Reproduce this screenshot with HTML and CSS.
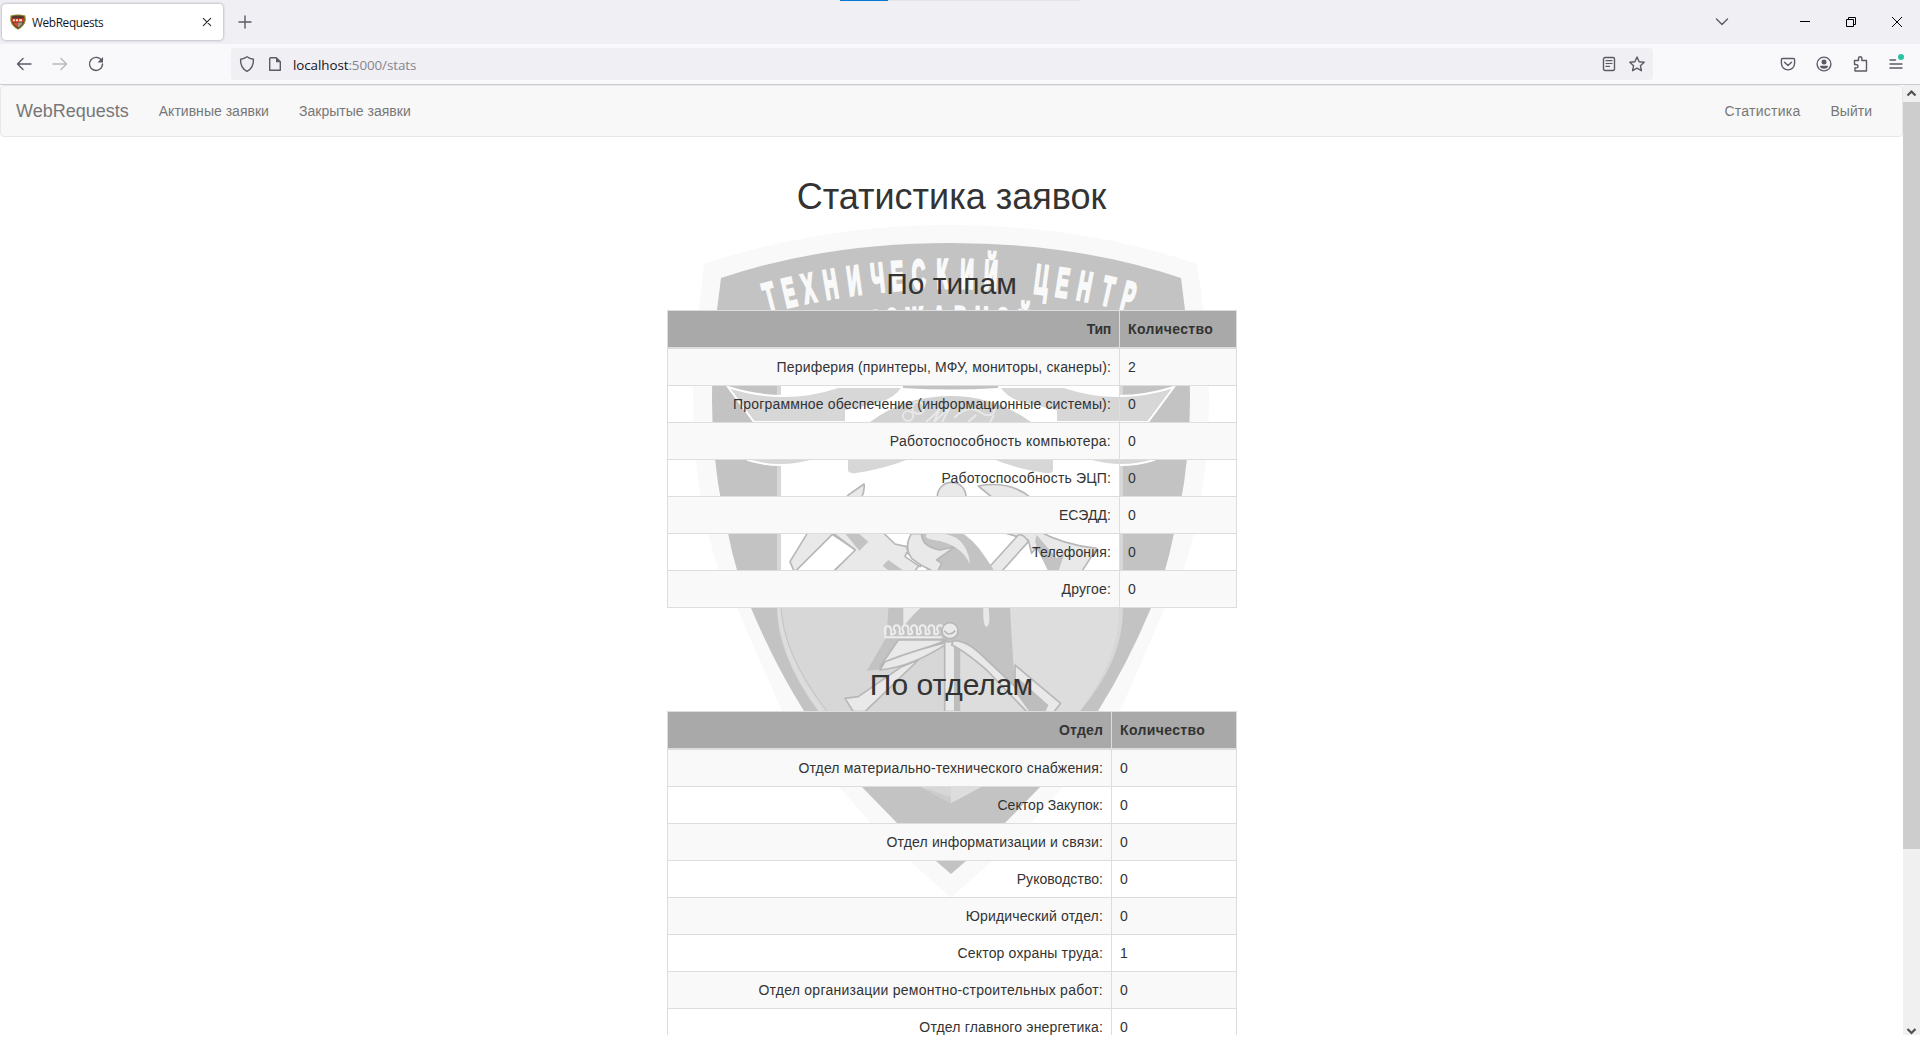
FILE: index.html
```html
<!DOCTYPE html>
<html lang="ru">
<head>
<meta charset="utf-8">
<title>WebRequests</title>
<link rel="stylesheet" href="styles.css">
</head>
<body>
<div class="window">
  <div class="progress"><span class="progress-done"></span></div>

  <div class="tabstrip">
    <div class="tab">
      <svg class="favicon" width="16" height="16" viewBox="0 0 16 16"><path d="M.6 1.600Q8-.8 15.400 1.600L15.800 6Q15 12 8 15.800 1 12 .2 6Z" fill="#8f8a2e"/><path d="M1.800 2.400Q8 .6 14.200 2.400L14.500 6Q14 11 8 14.500 2 11 1.500 6Z" fill="#56362c"/><path d="M2 4.500h12v3.500H2z" fill="#d63a22"/><path d="M3 5.200h2v2H3zM6 5.200h2v2H6zM9 5.200h3v2H9z" fill="#f2ddd0"/><path d="M3 8.500h5v5Q4 11.500 3 8.500z" fill="#dc4a2a"/><path d="M8 8.500h4.500Q12 11.500 8 13.500z" fill="#9a9a90"/></svg>
      <span class="tab-title">WebRequests</span>
      <svg class="tab-close" width="10" height="10" viewBox="0 0 10 10"><path d="M1.300 1.300l7.400 7.400M8.700 1.300L1.300 8.700" class="ln dark"/></svg>
    </div>
    <div class="btn"><svg width="14" height="14" viewBox="0 0 14 14"><path d="M7 1v12M1 7h12" class="ln"/></svg></div>
    <div class="spacer"></div>
    <div class="btn tabs-list"><svg width="14" height="14" viewBox="0 0 14 14"><path d="M1.500 4L7 9.500 12.500 4" class="ln"/></svg></div>
    <div class="wbtn"><svg width="10" height="10" viewBox="0 0 10 10" shape-rendering="crispEdges"><path d="M0 4h10v1H0z"/></svg></div>
    <div class="wbtn"><svg width="10" height="10" viewBox="0 0 10 10"><path d="M.5 2.500h7v7h-7zM2.500 2.500v-2h7v7h-2" fill="none" stroke="#000"/></svg></div>
    <div class="wbtn"><svg width="10" height="10" viewBox="0 0 10 10"><path d="M0 0l10 10M10 0L0 10" fill="none" stroke="#000"/></svg></div>
  </div>

  <div class="toolbar">
    <div class="btn"><svg width="16" height="16" viewBox="0 0 16 16"><path d="M15 8H1.800M7 2.500L1.500 8 7 13.500" class="ln"/></svg></div>
    <div class="btn off"><svg width="16" height="16" viewBox="0 0 16 16"><path d="M1 8h13.200M9 2.500L14.500 8 9 13.500" class="ln"/></svg></div>
    <div class="btn"><svg width="16" height="16" viewBox="0 0 16 16"><path d="M13.600 4.600A6.500 6.500 0 1 0 14.500 8" class="ln"/><path d="M15 1v5.500H9.500z" fill="#5b5b66"/></svg></div>
    <div class="urlbar">
      <svg width="16" height="18" viewBox="0 0 16 18"><path d="M8 1.700c2 1.500 4.200 2.200 6.400 2.500.3 5.200-1.400 9.500-6.400 12.200C3 13.700 1.300 9.400 1.600 4.200 3.800 3.900 6 3.200 8 1.700z" class="ln"/></svg>
      <svg class="doc" width="14" height="16" viewBox="0 0 14 16"><path d="M2.800 1.700h5.500l4 4v8.600H1.700V2.800q0-1.100 1.100-1.100z" class="ln"/><path d="M8 1.500v4.700h4.700z" fill="#5b5b66"/></svg>
      <span class="url"><b>localhost</b>:5000/stats</span>
      <span class="spacer"></span>
      <svg width="14" height="16" viewBox="0 0 14 16"><rect x="1.500" y="1.500" width="11" height="13" rx="1.500" class="ln"/><path d="M4 4.700h6M4 7.500h6M4 10.300h3.500" class="ln thin"/></svg>
      <svg class="star" width="18" height="18" viewBox="0 0 18 18"><path d="M9 2l2.100 4.700 5.100.6-3.800 3.400 1 5L9 13.200l-4.400 2.500 1-5L1.800 7.300l5.100-.6z" class="ln"/></svg>
    </div>
    <div class="btn"><svg width="16" height="16" viewBox="0 0 16 16"><path d="M2.600 2.500h10.800q1.200 0 1.200 1.200v3.600a6.600 6.600 0 0 1-13.200 0V3.700q0-1.200 1.200-1.200z" class="ln"/><path d="M4.500 6.200L8 9.500l3.500-3.300" class="ln"/></svg></div>
    <div class="btn"><svg width="16" height="16" viewBox="0 0 16 16"><circle cx="8" cy="8" r="6.900" class="ln"/><circle cx="8" cy="6" r="2.500" fill="#5b5b66"/><path d="M4 9.700h8q0 3-4 3t-4-3z" fill="#5b5b66"/></svg></div>
    <div class="btn"><svg width="16" height="18" viewBox="0 0 16 18"><path d="M3 16V12.800q3 .4 3-1.600T3 9.500H2.500V5.500h4V3.700q0-1.900 1.700-1.900t1.700 1.900v1.800h4.600V16z" class="ln"/></svg></div>
    <div class="btn menu"><svg width="14" height="14" viewBox="0 0 14 14"><path d="M1 3h5.500M1 7h12M1 11h12" class="ln"/></svg><span class="dot"></span></div>
  </div>

  <div class="viewport">
    <div class="page">
      <svg class="emblem" width="520" height="676" viewBox="691 224 520 676">
        <defs>
          <clipPath id="field"><path d="M781 380H1119V607Q1121 655 1080 711L981 787 951 803 921 787 827 711Q781 650 781 607Z"/></clipPath>
        </defs>
        <path fill="#f9f9f9" d="M704 264Q820 225 951 225T1197 264Q1201 288 1203 310 1209 360 1209 400 1209 470 1194 533 1183 580 1165 608L1120 711Q1090 760 1063 787L1031 823 992 861 951 898 910 861 871 823 839 787Q806 755 782 711L737 608Q719 580 708 533 693 470 693 400 693 360 699 310Z"/>
        <path fill="#c3c3c3" d="M721 278Q825 243 951 243T1181 278L1185 310Q1190 350 1190 400 1190 470 1174 533 1166 575 1151 608 1127 665 1098 711 1071 757 1040 787L1005 823 966 861 951 874 936 861 897 823 862 787Q831 757 804 711 775 665 751 608 736 575 728 533 712 470 712 400 712 350 717 310Z"/>
        <g class="motto">
          <g transform="rotate(-14.700 951 988) translate(951 288) scale(.46 1)"><text>Т</text></g>
          <g transform="rotate(-13.100 951 988) translate(951 288) scale(.46 1)"><text>Е</text></g>
          <g transform="rotate(-11.500 951 988) translate(951 288) scale(.46 1)"><text>Х</text></g>
          <g transform="rotate(-9.700 951 988) translate(951 288) scale(.46 1)"><text>Н</text></g>
          <g transform="rotate(-7.800 951 988) translate(951 288) scale(.46 1)"><text>И</text></g>
          <g transform="rotate(-5.900 951 988) translate(951 288) scale(.46 1)"><text>Ч</text></g>
          <g transform="rotate(-4.300 951 988) translate(951 288) scale(.46 1)"><text>Е</text></g>
          <g transform="rotate(-2.600 951 988) translate(951 288) scale(.46 1)"><text>С</text></g>
          <g transform="rotate(-.7 951 988) translate(951 288) scale(.46 1)"><text>К</text></g>
          <g transform="rotate(1.300 951 988) translate(951 288) scale(.46 1)"><text>И</text></g>
          <g transform="rotate(3.200 951 988) translate(951 288) scale(.46 1)"><text>Й</text></g>
          <g transform="rotate(7.300 951 988) translate(951 288) scale(.46 1)"><text>Ц</text></g>
          <g transform="rotate(9 951 988) translate(951 288) scale(.46 1)"><text>Е</text></g>
          <g transform="rotate(10.800 951 988) translate(951 288) scale(.46 1)"><text>Н</text></g>
          <g transform="rotate(12.700 951 988) translate(951 288) scale(.46 1)"><text>Т</text></g>
          <g transform="rotate(14.400 951 988) translate(951 288) scale(.46 1)"><text>Р</text></g>
          <g transform="rotate(-8.400 951 988) translate(951 335) scale(.46 1)"><text>О</text></g>
          <g transform="rotate(-6.700 951 988) translate(951 335) scale(.46 1)"><text>П</text></g>
          <g transform="rotate(-5 951 988) translate(951 335) scale(.46 1)"><text>О</text></g>
          <g transform="rotate(-3.100 951 988) translate(951 335) scale(.46 1)"><text>Ж</text></g>
          <g transform="rotate(-1 951 988) translate(951 335) scale(.46 1)"><text>А</text></g>
          <g transform="rotate(.8 951 988) translate(951 335) scale(.46 1)"><text>Р</text></g>
          <g transform="rotate(2.600 951 988) translate(951 335) scale(.46 1)"><text>Н</text></g>
          <g transform="rotate(4.400 951 988) translate(951 335) scale(.46 1)"><text>О</text></g>
          <g transform="rotate(6.200 951 988) translate(951 335) scale(.46 1)"><text>Й</text></g>
          <g transform="rotate(9.300 951 988) translate(951 331) scale(.46 1)"><text>С</text></g>
        </g>
        <path fill="#d7d7d7" d="M777 380H1123V607Q1124 660 1080 711L981 787 951 803 921 787 818 711Q777 655 777 607Z"/>
        <g clip-path="url(#field)">
          <path fill="#fff" d="M781 380H1119V590H781z"/>
          <path fill="#d7d7d7" d="M781 590H951V803H781z"/>
          <path fill="#ddd" d="M951 590H1125V803H951z"/>
        </g>
        <path d="M779 600Q779 655 822 711" fill="none" stroke="#ddd" stroke-width="4"/>
        <path d="M781 605Q782 653 827 711" fill="none" stroke="#c3c3c3"/>

        <!-- ribbon -->
        <g stroke="#fff" stroke-width="2" fill="#d7d7d7">
          <path d="M728 387Q784 405 838 387H903Q895 399 880 403L846 411V422H754Z"/>
          <path d="M1174 387Q1118 405 1064 387H999Q1007 399 1022 403L1056 411V422H1148Z"/>
          <path d="M748 460Q780 470 814 460V452H748zM1154 460Q1122 470 1088 460V452H1154z"/>
          <path d="M847 455V470Q847 475 856 474 885 470 912 459ZM1054 455V470Q1054 475 1045 474 1016 470 990 459Z"/>
        </g>
        <path d="M903 386V394Q895 404 848 412M999 386V394Q1007 404 1054 412" fill="none" stroke="#fff" stroke-width="2"/>
        <path fill="#c3c3c3" d="M903 386H998V388Q950 391 903 388z"/>
        <path fill="#d2d2d2" d="M870 422Q905 396 950 396T1031 422z"/>
        <g fill="none" stroke="#e8e8e8" stroke-width="2"><circle cx="918" cy="408" r="6"/><circle cx="908" cy="416" r="5"/><path d="M926 422Q938 412 940 408L934 422 950 407 942 422M954 418Q968 404 980 412T995 409M968 422L976 415M990 422l4-7"/></g>

        <!-- helmet, calipers and axe -->
        <g transform="translate(770 470) scale(.33333)" stroke-width="5" stroke="#b7b7b7" fill="#e9e9e9" stroke-linejoin="round">
          <path d="M60 275L115 185 235 75 282 42Q285 60 275 82L185 200 75 310Z"/>
          <path d="M190 195L258 240 190 305H75L190 190Z" fill="#fff"/>
          <path d="M190 190L300 150 375 222 410 230 415 252 450 282 430 310H185L256 240Z"/>
          <path d="M225 190h40l30 25-27 27zM355 270l50 35h-45l-22-18z" fill="#c3c3c3" stroke="none"/>
          <path d="M410 248l50 28-10 14-45-30z" fill="#fff"/>
          <path d="M625 48Q720 30 785 85L700 110ZM710 190L760 150 800 180Q880 225 980 235L935 305H840L800 230 785 250 775 210Z"/>
          <path d="M800 195l60 70 25-20-20 60h-30l-40-90z" fill="#c3c3c3" stroke="none"/>
          <path d="M650 300L745 195q15-5 30 20L685 315Z"/>
          <circle cx="545" cy="80" r="43"/>
          <path d="M570 90q-10 25-35 15" fill="none"/>
          <path d="M425 190Q400 240 440 275L470 290 460 400 355 415 350 500 290 603 400 590 540 510 650 590 735 650 725 500 720 410Q690 320 645 260 610 205 560 180Z" fill="#c3c3c3" stroke="none"/>
          <path d="M425 190Q400 230 425 265 450 285 472 295L500 310 515 280 500 270 555 230 510 240Q455 230 455 192Z"/>
          <path d="M500 190Q590 190 600 282 570 220 490 210Q460 205 470 192Z" stroke="none"/>
          <path d="M400 410H455L435 430Q420 445 400 470Z" stroke="none"/>
          <path d="M640 410h15q8 55-5 60-12 0-10-60z" stroke="none"/>
          <path d="M385 510H530L440 545Q400 555 330 590L385 510Z"/>
          <path d="M330 600Q430 590 540 515 450 535 345 575Z"/>
          <path d="M225 685L265 680 395 590 445 570 285 725H250Z"/>
          <path d="M524 515H568V725H524z"/>
          <path d="M552 515h18v210h-18z" fill="#bdbdbd" stroke="none"/>
          <path d="M550 512Q590 510 640 560L735 650 800 725H770L650 600Q580 540 545 525Z"/>
          <path d="M735 585L872 700 850 728H790L735 655Z"/>
          <path d="M745 625L835 705 825 728H780L735 665Z" fill="#bdbdbd" stroke="none"/>
          <path d="M345 496v-18q0-10 8-10t10 10 0 14 8 0 0-14q0-12 9-12t9 12 0 14 8 0 0-14q0-12 9-12t9 12 0 14 8 0 0-14q0-12 9-12t9 12 0 14 8 0 0-14q0-12 9-12t9 12 0 14 8 0 0-14q0-12 9-12t9 12 0 14 8 0 0-14q0-12 9-12t9 12 0 14 8 0 0-14q0-12 9-12t9 12v14M343 502H515" fill="none" stroke="#ededed" stroke-width="6"/>
          <circle cx="540" cy="482" r="24"/>
          <path d="M523 482q15 20 33 0" fill="none"/>
        </g>
        <path fill="#ccc" d="M921 787L951 797V803Z"/>
      </svg>

      <nav class="navbar">
        <span class="brand">WebRequests</span>
        <span class="navlink">Активные заявки</span>
        <span class="navlink">Закрытые заявки</span>
        <span class="spacer"></span>
        <span class="navlink wide">Статистика</span>
        <span class="navlink">Выйти</span>
      </nav>

      <main class="content">
        <h1>Статистика заявок</h1>
        <h2 class="first">По типам</h2>
        <table>
          <colgroup><col class="c-type"><col></colgroup>
          <thead><tr><th class="tight">Тип</th><th>Количество</th></tr></thead>
          <tbody>
            <tr><td>Периферия (принтеры, МФУ, мониторы, сканеры):</td><td>2</td></tr>
            <tr><td>Программное обеспечение (информационные системы):</td><td>0</td></tr>
            <tr><td class="wide">Работоспособность компьютера:</td><td>0</td></tr>
            <tr><td>Работоспособность ЭЦП:</td><td>0</td></tr>
            <tr><td class="tight">ЕСЭДД:</td><td>0</td></tr>
            <tr><td>Телефония:</td><td>0</td></tr>
            <tr><td>Другое:</td><td>0</td></tr>
          </tbody>
        </table>
        <h2>По отделам</h2>
        <table>
          <colgroup><col class="c-dept"><col></colgroup>
          <thead><tr><th>Отдел</th><th>Количество</th></tr></thead>
          <tbody>
            <tr><td>Отдел материально-технического снабжения:</td><td>0</td></tr>
            <tr><td class="tight">Сектор Закупок:</td><td>0</td></tr>
            <tr><td>Отдел информатизации и связи:</td><td>0</td></tr>
            <tr><td class="tight">Руководство:</td><td>0</td></tr>
            <tr><td>Юридический отдел:</td><td>0</td></tr>
            <tr><td>Сектор охраны труда:</td><td>1</td></tr>
            <tr><td class="wide">Отдел организации ремонтно-строительных работ:</td><td>0</td></tr>
            <tr><td>Отдел главного энергетика:</td><td>0</td></tr>
          </tbody>
        </table>
      </main>
    </div>
    <div class="scrollbar">
      <svg width="17" height="17" viewBox="0 0 17 17"><path d="M4.500 10.500L8.500 6.500l4 4" fill="none" stroke="#505050" stroke-width="2.200"/></svg>
      <span class="thumb"></span>
      <span class="spacer"></span>
      <svg width="17" height="12" viewBox="0 0 17 12"><path d="M4.500 6L8.500 10l4-4" fill="none" stroke="#505050" stroke-width="2.200"/></svg>
    </div>
  </div>
</div>
</body>
</html>
```
FILE: styles.css
```css
* { box-sizing: border-box; }
html, body { margin: 0; height: 100%; overflow: hidden; background: #fff; }
body { font: 14px/20px "Liberation Sans", Arial, sans-serif; color: #333; }
svg { display: block; flex: none; }

.window { position: relative; display: flex; flex-direction: column; width: 1920px; height: 1035px; overflow: hidden; }
.spacer { flex: 1; }
.ln { fill: none; stroke: #5b5b66; stroke-width: 1.4; stroke-linejoin: round; stroke-linecap: round; }
.ln.thin { stroke-width: 1.2; }
.ln.dark { stroke: #2a2a33; stroke-width: 1.1; }

.progress { position: absolute; top: 0; left: 840px; width: 241px; height: 1px; background: #e4e4e4; }
.progress-done { display: block; width: 48px; height: 1px; background: #0078d7; }

.tabstrip { display: flex; flex: none; height: 44px; background: #f0eff4; padding-left: 2px; }
.tab { display: flex; align-items: center; width: 221px; height: 36px; margin: 4px 4px 0 0; padding: 0 11px 0 8px; background: #fff; border-radius: 4px; box-shadow: 0 0 3px rgba(90, 90, 110, .6); }
.favicon { margin-top: -1px; }
.tab-title { flex: 1; margin-left: 6px; font: 11.800px/16px "Open Sans", sans-serif; letter-spacing: -.35px; color: #15141a; }
.tab-close { margin-top: -1px; }
.btn { display: flex; flex: none; align-items: center; justify-content: center; width: 36px; height: 40px; }
.tabstrip .btn { height: 44px; }
.tabs-list { margin-right: 42px; }
.wbtn { display: flex; align-items: center; justify-content: center; width: 46px; height: 43px; }

.toolbar { display: flex; flex: none; align-items: center; height: 41px; padding: 0 6px; background: #f9f9fb; border-bottom: 1px solid #ccccd0; }
.off { opacity: .4; }
.urlbar { display: flex; align-items: center; width: 1422px; height: 32px; margin: 0 117px; padding: 0 7px 0 8px; background: #f0eff4; border-radius: 4px; }
.doc { margin-left: 13px; }
.url { margin-left: 11px; padding-top: 1px; font: 13.400px/20px "Open Sans", sans-serif; letter-spacing: -.08px; color: #85858c; }
.url b { font-weight: 400; color: #15141a; }
.star { margin-left: 12px; }
.menu { position: relative; }
.dot { position: absolute; top: 10px; left: 20px; width: 6px; height: 6px; border-radius: 50%; background: #2ac3a2; }

.viewport { display: flex; flex: 1; min-height: 0; overflow: hidden; }
.page { position: relative; z-index: 0; width: 1903px; overflow: hidden; }
.emblem { position: absolute; left: 691px; top: 139px; z-index: -1; }
.motto text { font: bold 41px "Liberation Sans", Arial, sans-serif; fill: #f9f9f9; stroke: #f9f9f9; stroke-width: 3px; text-anchor: middle; }

.navbar { display: flex; height: 52px; padding: 0 15px 0 0; background: #f8f8f8; border: 1px solid #e7e7e7; border-radius: 4px; color: #777; }
.brand { padding: 15px; font-size: 18px; }
.navlink { padding: 15px; letter-spacing: .02px; }
.navlink.wide { letter-spacing: .25px; }

.content { display: flex; flex-direction: column; align-items: center; }
h1, h2 { margin: 0; font-weight: 400; line-height: 1.1; }
h1 { margin-top: 40px; font-size: 36px; height: 40px; }
h2 { margin: 60px 0 10px; font-size: 30px; height: 33px; }
h2.first { margin-top: 50px; }
table { width: 570px; margin-left: 1px; table-layout: fixed; border-collapse: collapse; border: 1px solid #ddd; }
.c-type { width: 452px; }
.c-dept { width: 444px; }
th, td { height: 37px; padding: 8px; border: 1px solid #ddd; text-align: left; letter-spacing: .16px; }
th:first-child, td:first-child { text-align: right; }
th { background: #a9a9a9; border-bottom-width: 2px; }
th:last-child { letter-spacing: .36px; }
tbody tr:nth-child(odd) td { background: #f9f9f9; }
td.wide { letter-spacing: .25px; }
td.tight { letter-spacing: .05px; }
th.tight { letter-spacing: -.3px; }

.scrollbar { display: flex; flex-direction: column; width: 17px; background: #f0f0f0; }
.thumb { height: 747px; background: #cdcdcd; }
```
